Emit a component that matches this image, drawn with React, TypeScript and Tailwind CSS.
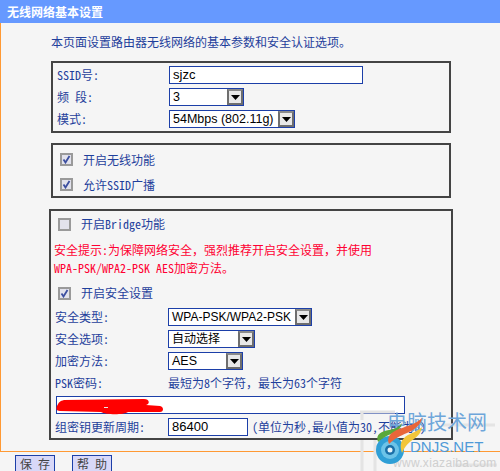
const blue = "text-[#1f3f9c]"
const cjk = "font-['Noto_Sans_Mono_CJK_SC','Noto_Sans_CJK_SC',monospace]"
const arial = "font-['Liberation_Sans','Noto_Sans_CJK_SC',sans-serif]"

function DropArrow() {
  return (
    <div className="w-[16px] self-stretch flex items-center justify-center bg-[#e8e8e8] border-2 border-[#6e6e6e] border-t-[#8a8a8a]">
      <svg width="9" height="5" viewBox="0 0 9 5">
        <path d="M0 0h9L4.5 5z" fill="#000" />
      </svg>
    </div>
  )
}

function Select({ value, width, small }: { value: string; width: string; small?: boolean }) {
  return (
    <div className={`${width} h-[18px] flex items-center bg-white border border-[#1c3fa8] ${small ? "text-[12px]" : "text-[12.5px]"} text-black ${arial}`}>
      <span className="flex-1 pl-[3px] whitespace-nowrap overflow-hidden">{value}</span>
      <DropArrow />
    </div>
  )
}

function TextBox({ value, width }: { value?: string; width: string }) {
  return (
    <div className={`${width} h-[18px] flex items-center bg-white border border-[#1c3fa8] pl-[3px] text-[13px] text-black ${arial}`}>
      {value}
    </div>
  )
}

function Check({ checked }: { checked?: boolean }) {
  return (
    <div className="w-[13px] h-[13px] flex items-center justify-center border-2 border-[#9a9a9a] bg-[#e2e2ec]">
      {checked && (
        <svg width="9" height="9" viewBox="0 0 9 9">
          <path d="M1.5 4.5 3.5 7.5 7.5 1" fill="none" stroke="#3c4fa0" strokeWidth="1.8" />
        </svg>
      )}
    </div>
  )
}

function FormRow({ label, labelWidth, children }: { label: string; labelWidth: string; children: React.ReactNode }) {
  return (
    <div className="h-[22px] flex items-center">
      <div className={`${labelWidth} pl-[4px] whitespace-pre`}>{label}</div>
      {children}
    </div>
  )
}

function Watermark() {
  return (
    <div className="absolute left-[355px] top-[405px] w-[145px] h-[66px] overflow-hidden">
      <svg className="absolute left-0 top-0" width="145" height="66" viewBox="0 0 145 66">
        <path d="M5 7H40M7 7V15M7 35V66M20 35V66M88 20H140M100 60H142" fill="none" stroke="#e4e4e4" strokeWidth="3" />
      </svg>
      <div className="absolute left-[32px] top-[4px] text-[20px] leading-[26px] text-[#6ea6da] whitespace-nowrap font-['Noto_Sans_CJK_SC',sans-serif]">
        电脑技术网
      </div>
      <div className="absolute left-[55px] top-[33px] text-[15px] leading-[18px] text-[#4f9ad8] whitespace-nowrap font-['Liberation_Sans',sans-serif]">
        DNJS.NET
      </div>
      <div className="absolute left-[38px] top-[52px] text-[12px] leading-[13px] tracking-[0.3px] text-[#cfcfcf] whitespace-nowrap font-['Liberation_Sans',sans-serif]">
        www.xiazaiba.com
      </div>
      <svg className="absolute left-[10px] top-0" width="70" height="66" viewBox="0 0 70 66">
        <circle cx="25" cy="45" r="14" fill="#2f9fd6" />
        <circle cx="25" cy="45" r="9" fill="#6cc3e8" />
        <circle cx="25" cy="45" r="5" fill="#1a6fa8" />
        <circle cx="25" cy="45" r="2.5" fill="#e6f4fb" />
        <path d="M13 37C10 29 17 26 24 25c6-1 10-3 13-7-1 6-6 9-11 11-5 2-8 4-13 8z" fill="#5aa83a" />
        <path d="M24 39c-3-7 2-12 10-15 9-3 17-5 23-11-1 7-8 12-15 15-7 3-12 5-18 11z" fill="#e8663a" />
        <path d="M37 48c-3-8-1-14 6-18 6-3 10-4 14-8-1 6-4 9-8 12-5 3-9 7-12 14z" fill="#f2c53a" />
      </svg>
    </div>
  )
}

export default function App() {
  return (
    <div className={`relative w-[500px] h-[471px] overflow-hidden bg-[#f5f5f5] text-[12px] ${blue} ${cjk}`}>
      <div className="h-[23px] flex items-center pl-[7px] bg-[#6699ff] text-white font-bold">无线网络基本设置</div>

      <div className="border-l border-b border-[#ff9933] h-[429px] pl-[48px]">
        <p className="h-[38px] pl-[2px] flex items-center">本页面设置路由器无线网络的基本参数和安全认证选项。</p>

        <div className="ml-[2px] w-[400px] h-[72px] border-2 border-[#444] py-px">
          <FormRow label="SSID号:" labelWidth="w-[116px]">
            <TextBox value="sjzc" width="w-[194px]" />
          </FormRow>
          <FormRow label="频 段:" labelWidth="w-[116px]">
            <Select value="3" width="w-[75px]" />
          </FormRow>
          <FormRow label="模式:" labelWidth="w-[116px]">
            <Select value="54Mbps (802.11g)" width="w-[126px]" />
          </FormRow>
        </div>

        <div className="ml-[2px] mt-[10px] w-[400px] h-[55px] border-2 border-[#444] pt-[2px] pl-[7px]">
          <div className="h-[25px] flex items-center gap-[10px]">
            <Check checked />
            <span>开启无线功能</span>
          </div>
          <div className="h-[25px] flex items-center gap-[10px]">
            <Check checked />
            <span>允许SSID广播</span>
          </div>
        </div>

        <div className="mt-[11px] w-[404px] h-[231px] border-2 border-[#444]">
          <div className="h-[26px] flex items-center gap-[10px] pl-[7px]">
            <Check />
            <span>开启Bridge功能</span>
          </div>
          <div className="mt-[4px] h-[18px] pl-[3px] flex items-center text-[#ff0033] whitespace-nowrap">
            安全提示:为保障网络安全，强烈推荐开启安全设置，并使用
          </div>
          <div className="h-[18px] pl-[3px] flex items-center text-[#ff0033] whitespace-pre">
            WPA-PSK/WPA2-PSK AES加密方法。
          </div>
          <div className="mt-[3px] h-[26px] flex items-center gap-[10px] pl-[7px]">
            <Check checked />
            <span>开启安全设置</span>
          </div>
          <FormRow label="安全类型:" labelWidth="w-[117px]">
            <Select value="WPA-PSK/WPA2-PSK" width="w-[144px]" small />
          </FormRow>
          <FormRow label="安全选项:" labelWidth="w-[117px]">
            <Select value="自动选择" width="w-[87px]" small />
          </FormRow>
          <FormRow label="加密方法:" labelWidth="w-[117px]">
            <Select value="AES" width="w-[75px]" />
          </FormRow>
          <FormRow label="PSK密码:" labelWidth="w-[117px]">
            <span className="whitespace-nowrap">最短为8个字符，最长为63个字符</span>
          </FormRow>
          <div className="h-[22px] flex items-center pl-[5px]">
            <div className="relative w-[349px] h-[18px] bg-white border border-[#1c3fa8]">
              <svg className="absolute -left-[1px] top-[1px]" width="110" height="17" viewBox="0 0 110 17">
                <path
                  d="M1 8C3 4 4 3 8 2L88 1C94 1 94 6 90 7L104 8C108 9 108 14 104 14L72 14C68 17 50 17 45 14L4 13C0 13 0 10 1 8Z"
                  fill="#ff0000"
                />
                <rect x="48" y="9" width="4" height="1" fill="#e8e8e8" />
              </svg>
            </div>
          </div>
          <FormRow label="组密钥更新周期:" labelWidth="w-[117px]">
            <TextBox value="86400" width="w-[80px]" />
            <span className="ml-[4px] whitespace-nowrap">(单位为秒,最小值为30,不能为0)</span>
          </FormRow>
        </div>
      </div>

      <div className="flex gap-[17px] pl-[15px] pt-[3px]">
        <button className="w-[40px] h-[16px] leading-[14px] border border-b-0 border-[#1c3fa8] bg-[#d8d8f8] text-[#444] whitespace-pre">保 存</button>
        <button className="w-[40px] h-[16px] leading-[14px] border border-b-0 border-[#1c3fa8] bg-[#d8d8f8] text-[#444] whitespace-pre">帮 助</button>
      </div>

      <Watermark />
    </div>
  )
}
